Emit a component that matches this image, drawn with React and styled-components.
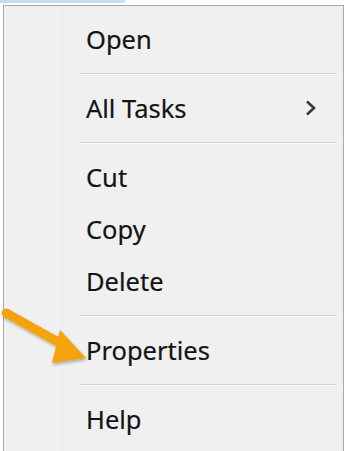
import React from "react"
import styled, { createGlobalStyle } from "styled-components"

const Global = createGlobalStyle`
  body {
    margin: 0;
    background: #ffffff;
    font-family: "Noto Sans", "Open Sans", sans-serif;
  }
`

const Page = styled.div`
  position: relative;
  width: 350px;
  height: 451px;
  overflow: hidden;
  background: #ffffff;
`

const TopStrip = styled.div`
  width: 125px;
  height: 3px;
  background: #c6def4;
`

const Menu = styled.div`
  margin: 2px 0 0 3px;
  width: 341px;
  height: 460px;
  box-sizing: border-box;
  background: #f0f0f0;
  border: 1px solid #a9a9a9;
  border-bottom: none;
  padding: 7px 6px 0 2px;
  display: flex;
  flex-direction: column;
  position: relative;

  &::before {
    content: "";
    position: absolute;
    left: 58px;
    top: 0;
    bottom: 0;
    width: 1px;
    background: #ebebeb;
  }
`

const Item = styled.div`
  height: 52px;
  display: flex;
  align-items: center;
  justify-content: space-between;
  padding: 0 18px 0 80px;
  font-size: 25.5px;
  color: #141414;
  -webkit-text-stroke: 0.2px #141414;
`

const Separator = styled.div`
  height: 17px;
  display: flex;
  align-items: center;
  padding-left: 74px;

  &::after {
    content: "";
    flex: 1;
    height: 1px;
    background: #d4d4d4;
    box-shadow: 0 1px 0 #fbfbfb;
  }
`

const Arrow = styled.svg`
  position: absolute;
  left: 0;
  top: 300px;
`

const Chevron = () => (
  <svg width="16" height="20" viewBox="0 0 16 20">
    <path d="M4 3.5 L11 10 L4 16.5" fill="none" stroke="#3a3a3a" strokeWidth="2.6" />
  </svg>
)

export default function App() {
  return (
    <Page>
      <Global />
      <TopStrip />
      <Menu>
        <Item>Open</Item>
        <Separator />
        <Item>All Tasks <Chevron /></Item>
        <Separator />
        <Item>Cut</Item>
        <Item>Copy</Item>
        <Item>Delete</Item>
        <Separator />
        <Item>Properties</Item>
        <Separator />
        <Item>Help</Item>
      </Menu>
      <Arrow width="95" height="75" viewBox="0 0 95 75">
        <defs>
          <filter id="sh" x="-20%" y="-20%" width="140%" height="140%">
            <feDropShadow dx="1" dy="2" stdDeviation="1.5" floodColor="#000" floodOpacity="0.3" />
          </filter>
        </defs>
        <g filter="url(#sh)">
          <path d="M6 13 L60 43" stroke="#f5a30f" strokeWidth="9" strokeLinecap="round" fill="none" />
          <path d="M60 30 L86 58 L52 63 Z" fill="#f5a30f" />
        </g>
      </Arrow>
    </Page>
  )
}
